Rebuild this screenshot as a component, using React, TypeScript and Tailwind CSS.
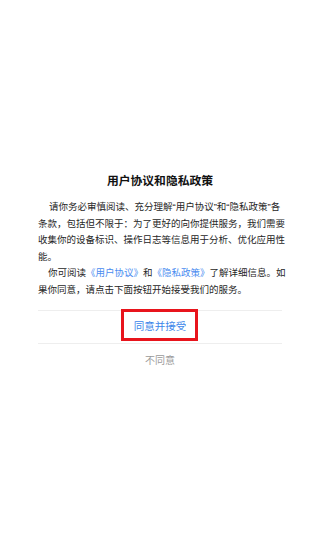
import React from "react";

export default function App() {
  const font = { fontFamily: '"Liberation Sans", "Noto Sans CJK SC", sans-serif' };
  return (
    <div className="w-[320px] h-[550px] bg-white" style={font}>
      <div className="px-[38px] pt-[173px]">
        <div className="text-center text-[11.8px] leading-[16px] font-bold text-[#111]">
          用户协议和隐私政策
        </div>
        <div className="mt-[10px] text-[9.5px] leading-[16.6px] text-[#262626] whitespace-nowrap">
          <p className="indent-[11px]">
            请你务必审慎阅读、充分理解“用户协议”和“隐私政策”各
            <br />
            条款，包括但不限于：为了更好的向你提供服务，我们需要
            <br />
            收集你的设备标识、操作日志等信息用于分析、优化应用性
            <br />
            能。
          </p>
          <p className="indent-[10px]">
            你可阅读<span className="text-[#4a8cf0]">《用户协议》</span>和<span className="text-[#4a8cf0]">《隐私政策》</span>了解详细信息。如
            <br />
            果你同意，请点击下面按钮开始接受我们的服务。
          </p>
        </div>
        <div className="mt-[11px] border-t border-[#eeeeee]">
          <div className="relative h-[32px] flex items-center justify-center text-[10.5px] text-[#3b86ea]">
            同意并接受
            <div className="absolute left-[82.5px] top-[-1.5px] w-[77px] h-[31.5px] border-[3px] border-[#e8141c]" />
          </div>
          <div className="border-t border-[#eeeeee] h-[34px] flex items-center justify-center text-[10px] text-[#9a9a9a]">
            不同意
          </div>
        </div>
      </div>
    </div>
  );
}
